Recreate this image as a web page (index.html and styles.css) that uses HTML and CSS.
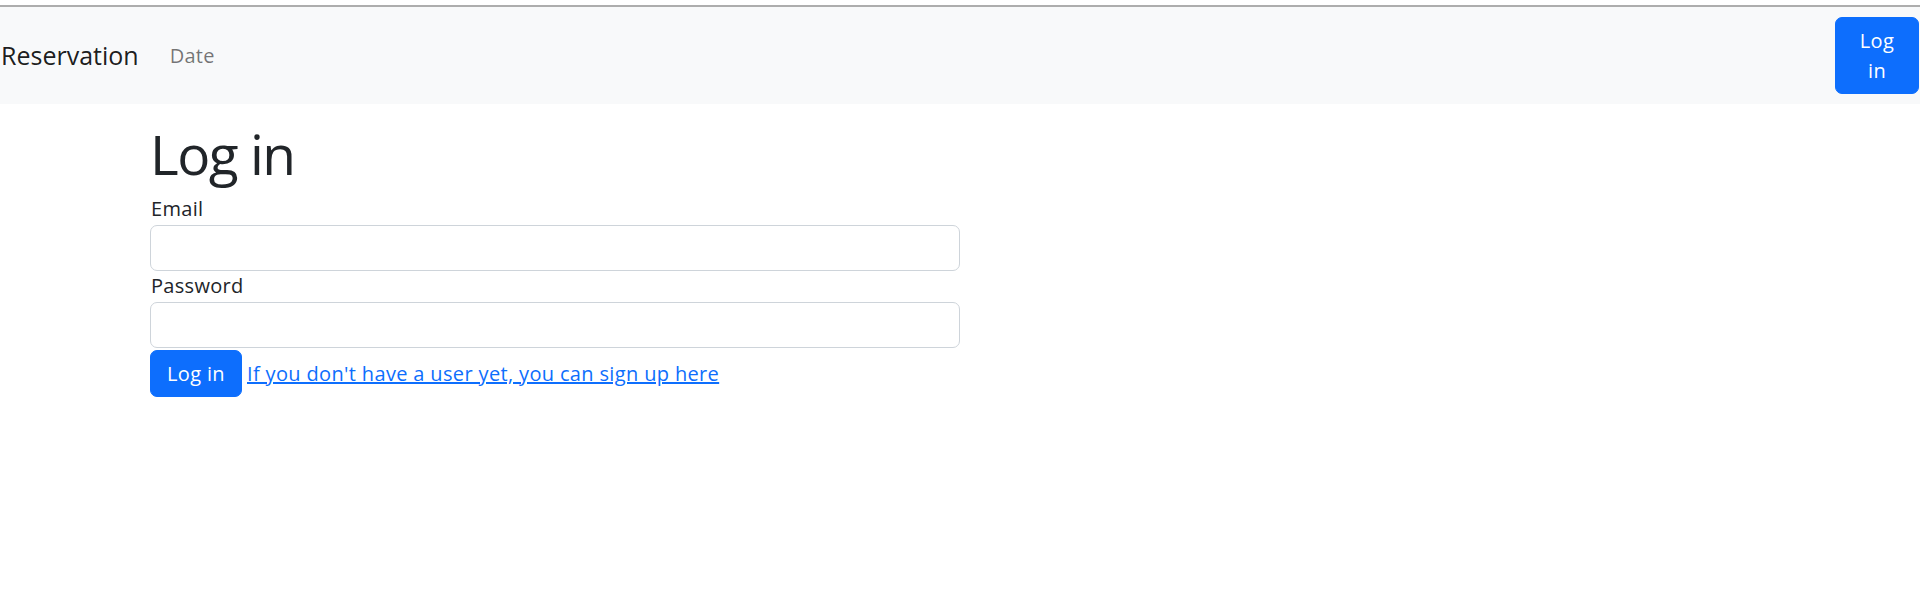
FILE: index.html
```html
<!DOCTYPE html>
<html lang="en">
<head>
<meta charset="utf-8">
<title>Log in - Reservation</title>
<link rel="stylesheet" href="styles.css">
</head>
<body>
<div class="topline"></div>
<nav class="navbar">
  <div class="nav-left">
    <a class="brand" href="#">Reservation</a>
    <a class="nav-link" href="#">Date</a>
  </div>
  <button class="btn btn-nav" type="button">Log in</button>
</nav>
<main class="container">
  <div class="col">
    <h1 class="title">Log in</h1>
    <form class="form">
      <label class="label" for="email">Email</label>
      <input class="input" id="email" type="email">
      <label class="label" for="password">Password</label>
      <input class="input" id="password" type="password">
      <div class="actions">
        <button class="btn btn-submit" type="submit">Log in</button>
        <a class="signup" href="#">If you don't have a user yet, you can sign up here</a>
      </div>
    </form>
  </div>
</main>
</body>
</html>
```
FILE: styles.css
```css
html, body {
  margin: 0;
  padding: 0;
  background: #ffffff;
}
body {
  font-family: "Open Sans", "Noto Sans", "Liberation Sans", sans-serif;
  color: #212529;
  font-size: 20px;
  line-height: 30px;
}
.topline {
  height: 5px;
  border-bottom: 2px solid #adadad;
  background: #ffffff;
}
.navbar {
  display: flex;
  align-items: center;
  justify-content: space-between;
  background: #f8f9fa;
  padding: 10px 0;
}
.nav-left {
  display: flex;
  align-items: center;
}
.brand {
  font-size: 25px;
  line-height: 37px;
  color: rgba(0, 0, 0, 0.9);
  text-decoration: none;
  padding-left: 1px;
  margin-right: 21px;
}
.nav-link {
  font-size: 20px;
  line-height: 30px;
  letter-spacing: 0.3px;
  color: rgba(0, 0, 0, 0.55);
  text-decoration: none;
  padding: 0 10px;
}
.btn {
  font-family: inherit;
  font-size: 20px;
  line-height: 30px;
  letter-spacing: 0.35px;
  color: #ffffff;
  background: #0d6efd;
  border: 1px solid #0d6efd;
  border-radius: 7px;
  cursor: pointer;
  box-sizing: border-box;
}
.btn-nav {
  width: 84px;
  height: 77px;
  padding: 7px 15px;
  margin-right: 1px;
  text-align: center;
}
.container {
  max-width: 1620px;
  margin: 0 auto;
  padding: 0 15px;
}
.col {
  width: 810px;
}
.title {
  font-size: 55px;
  font-weight: 400;
  line-height: 66px;
  margin: 17px 0 7px;
  letter-spacing: -1.5px;
}
.form {
  display: flex;
  flex-direction: column;
}
.label {
  font-size: 20px;
  line-height: 30px;
  letter-spacing: 0.3px;
  padding-left: 1px;
}
.input {
  display: block;
  width: 100%;
  height: 46px;
  box-sizing: border-box;
  border: 1px solid #ced4da;
  border-radius: 7px;
  background: #ffffff;
  margin: 1px 0 0;
  padding: 7px 15px;
  font-family: inherit;
  font-size: 20px;
}
.actions {
  display: flex;
  align-items: center;
  gap: 5px;
  margin-top: 2px;
}
.btn-submit {
  width: 92px;
  height: 47px;
  padding: 7px 15px;
}
.signup {
  font-size: 20px;
  letter-spacing: 0.35px;
  color: #0d6efd;
  text-decoration: underline;
}
```
